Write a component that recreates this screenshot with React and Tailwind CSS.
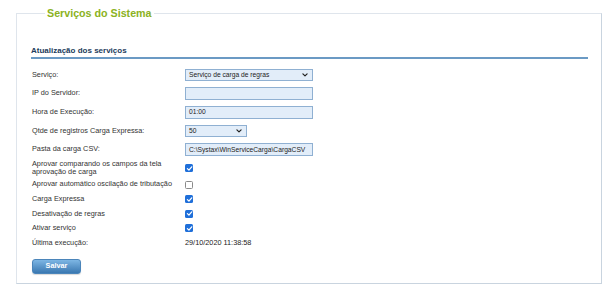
import React from "react";

function Check({ checked }) {
  return checked ? (
    <span className="flex h-[8px] w-[8px] items-center justify-center rounded-[1.5px] bg-[#1f6fd9]">
      <svg viewBox="0 0 10 10" className="h-[7px] w-[7px]">
        <path d="M2 5.2 L4.2 7.3 L8.2 2.6" fill="none" stroke="#fff" strokeWidth="1.8" strokeLinecap="round" strokeLinejoin="round" />
      </svg>
    </span>
  ) : (
    <span className="block h-[8px] w-[8px] rounded-[1.5px] border border-[#8a8a8a] bg-white" />
  );
}

function Chevron() {
  return (
    <svg viewBox="0 0 10 10" className="h-[6px] w-[6px]">
      <path d="M1.5 3 L5 6.5 L8.5 3" fill="none" stroke="#222" strokeWidth="2" strokeLinecap="round" strokeLinejoin="round" />
    </svg>
  );
}

function Select({ value, w }) {
  return (
    <div className={`flex h-[12.5px] ${w} items-center justify-between border border-[#8fb0d2] bg-[#e2edf9] pl-[3px] pr-[4px] text-[6.7px] text-[#222]`}>
      <span>{value}</span>
      <Chevron />
    </div>
  );
}

function Input({ value }) {
  return (
    <div className="flex h-[12.5px] w-[128px] items-center border border-[#8fb0d2] bg-[#e2edf9] pl-[3px] text-[6.7px] text-[#222]">
      {value}
    </div>
  );
}

function Row({ label, children, h = "h-[18.7px]" }) {
  return (
    <div className={`flex ${h} items-center`}>
      <div className="w-[154px] pl-[1px] pr-[6px] text-[7.3px] leading-[8.5px] text-[#333]">{label}</div>
      <div className="flex items-center">{children}</div>
    </div>
  );
}

export default function App() {
  return (
    <div className="h-[298px] w-[614px] bg-white font-['Liberation_Sans',Arial,sans-serif]">
      <div className="pl-[16px] pr-[12px] pt-[5px]">
        <fieldset className="border border-[#dfe5ec] border-b-[#c9d4df] border-r-[#c9d4df] pb-[9px] pl-[14px] pr-[13px]">
          <legend className="ml-[14px] px-[2px] text-[10.7px] font-bold leading-[16px] text-[#8bb222]">
            Serviços do Sistema
          </legend>
          <div className="mt-[25px] border-b-2 border-[#6b9ac4] pb-[1px] text-[8px] font-bold leading-[10px] text-[#1c3b5c]">
            Atualização dos serviços
          </div>
          <div className="mt-[6.6px]">
            <Row label="Serviço:">
              <Select value="Serviço de carga de regras" w="w-[128px]" />
            </Row>
            <Row label="IP do Servidor:">
              <Input value="" />
            </Row>
            <Row label="Hora de Execução:">
              <Input value="01:00" />
            </Row>
            <Row label="Qtde de registros Carga Expressa:">
              <Select value="50" w="w-[62px]" />
            </Row>
            <Row label="Pasta da carga CSV:">
              <Input value="C:\Systax\WinServiceCarga\CargaCSV" />
            </Row>
            <Row label="Aprovar comparando os campos da tela aprovação de carga" h="h-[18.2px]">
              <Check checked />
            </Row>
            <Row label="Aprovar automático oscilação de tributação" h="h-[14.65px]">
              <Check checked={false} />
            </Row>
            <Row label="Carga Expressa" h="h-[14.65px]">
              <Check checked />
            </Row>
            <Row label="Desativação de regras" h="h-[14.65px]">
              <Check checked />
            </Row>
            <Row label="Ativar serviço" h="h-[14.65px]">
              <Check checked />
            </Row>
            <Row label="Última execução:" h="h-[14.65px]">
              <span className="text-[7.3px] text-[#222]">29/10/2020 11:38:58</span>
            </Row>
          </div>
          <button className="mt-[8.4px] ml-[1px] flex h-[15px] w-[49px] items-center justify-center rounded-[3px] border border-[#4b85ba] bg-linear-to-b from-[#7db6e4] to-[#3a78b1] text-[7.3px] font-bold text-white shadow-[0_1px_1px_rgba(0,0,0,0.15)]">
            Salvar
          </button>
        </fieldset>
      </div>
    </div>
  );
}
